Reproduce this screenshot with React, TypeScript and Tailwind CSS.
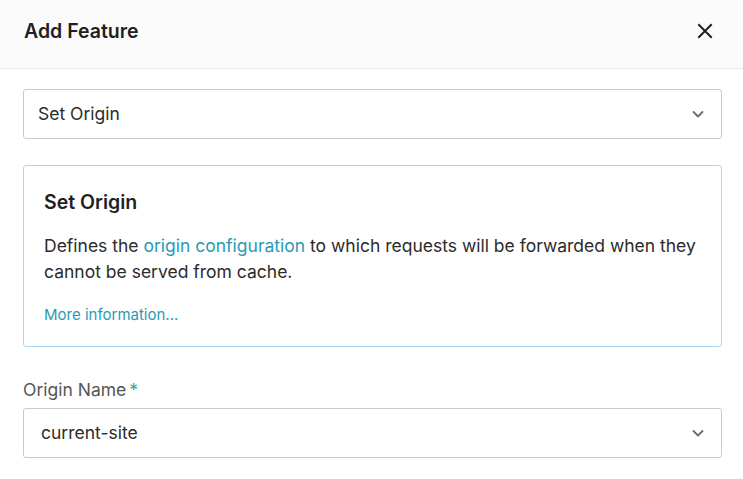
import React from 'react';

const Chevron: React.FC = () => (
  <svg width="14" height="14" viewBox="0 0 14 14" fill="none" stroke="#6b6b6b" strokeWidth="1.8" strokeLinecap="round" strokeLinejoin="round">
    <path d="M2.5 5 L7 9.5 L11.5 5" />
  </svg>
);

const SelectBox: React.FC<{ value: string; pad: string }> = ({ value, pad }) => (
  <div className={`flex items-center justify-between h-[50px] border border-[#c9c9c9] rounded-[3px] bg-white ${pad} pr-[16px]`}>
    <span className="text-[17.5px] text-[#2b2b2b]">{value}</span>
    <Chevron />
  </div>
);

export default function App() {
  return (
    <div className="w-[743px] h-[479px] bg-white overflow-hidden" style={{ fontFamily: 'Inter, "Noto Sans", sans-serif' }}>
      {/* Header */}
      <header className="flex items-center justify-between h-[69px] px-[24px] bg-[#fbfbfb] border-b border-[#e9e9e9]">
        <h1 className="text-[19.5px] font-semibold text-[#1f1f1f] -mt-[4px]">Add Feature</h1>
        <button className="w-[24px] h-[24px] flex items-center justify-center -mt-[6px] mr-[2px]">
          <svg width="16" height="16" viewBox="0 0 16 16" fill="none" stroke="#1f1f1f" strokeWidth="2" strokeLinecap="square">
            <path d="M2 2 L14 14 M14 2 L2 14" />
          </svg>
        </button>
      </header>

      <div className="pl-[23px] pr-[21px] pt-[20px]">
        <SelectBox value="Set Origin" pad="pl-[14px]" />

        {/* Description card */}
        <div className="mt-[26px] border border-[#a9d5f3] rounded-[3px] px-[20px] pt-[22px] pb-[21px]">
          <h2 className="text-[19.5px] font-semibold text-[#1f1f1f] leading-[28px]">Set Origin</h2>
          <p className="mt-[17px] text-[17.5px] leading-[26px] text-[#2b2b2b]">
            Defines the <a className="text-[#2a9ab3]">origin configuration</a> to which requests will be forwarded when they cannot be served from cache.
          </p>
          <a className="block mt-[20px] text-[15px] leading-[20px] text-[#2a9ab3]">More information...</a>
        </div>

        {/* Origin name */}
        <label className="block mt-[31px] text-[17.5px] leading-[24px] text-[#555]">
          Origin Name<span className="text-[#27b089] ml-[3px]">*</span>
        </label>
        <div className="mt-[6px]">
          <SelectBox value="current-site" pad="pl-[17px]" />
        </div>
      </div>
    </div>
  );
}
